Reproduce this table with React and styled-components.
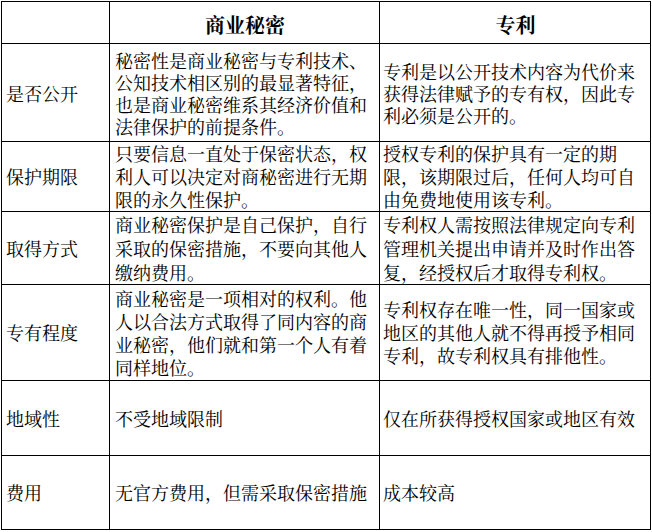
import styled, { createGlobalStyle } from "styled-components";

const GlobalStyle = createGlobalStyle`
  body {
    margin: 0;
    background: #fff;
    font-family: "Noto Serif CJK SC", "Noto Sans CJK SC", serif;
    color: #000;
  }
`;

const Page = styled.div`
  padding: 1px;
`;

const Grid = styled.div`
  display: inline-grid;
  grid-template-columns: 107px 269px 270px;
  grid-template-rows: 41px 97px 69px 72px 95px 74px 73px;
  gap: 1px;
  padding: 1px;
  background: #000;
`;

const Row = styled.div`
  display: contents;
  line-height: ${(p) => p.$lh || 23}px;
`;

const Cell = styled.div`
  background: #fff;
  display: flex;
  align-items: center;
  font-size: 18px;
  padding: 0 3px 0 ${(p) => p.$pl || 4}px;
`;

const HeadCell = styled(Cell)`
  justify-content: center;
  font-weight: bold;
  font-size: 20px;
  padding-top: 4px;
`;

const rows = [
  {
    label: "是否公开",
    lh: 22,
    secret: "秘密性是商业秘密与专利技术、公知技术相区别的最显著特征，也是商业秘密维系其经济价值和法律保护的前提条件。",
    patent: "专利是以公开技术内容为代价来获得法律赋予的专有权，因此专利必须是公开的。",
  },
  {
    label: "保护期限",
    lh: 23,
    secret: "只要信息一直处于保密状态，权利人可以决定对商秘密进行无期限的永久性保护。",
    patent: "授权专利的保护具有一定的期限，该期限过后，任何人均可自由免费地使用该专利。",
  },
  {
    label: "取得方式",
    lh: 24,
    secret: "商业秘密保护是自己保护，自行采取的保密措施，不要向其他人缴纳费用。",
    patent: "专利权人需按照法律规定向专利管理机关提出申请并及时作出答复，经授权后才取得专利权。",
  },
  {
    label: "专有程度",
    lh: 23,
    secret: "商业秘密是一项相对的权利。他人以合法方式取得了同内容的商业秘密，他们就和第一个人有着同样地位。",
    patent: "专利权存在唯一性，同一国家或地区的其他人就不得再授予相同专利，故专利权具有排他性。",
  },
  {
    label: "地域性",
    lh: 23,
    secret: "不受地域限制",
    patent: "仅在所获得授权国家或地区有效",
  },
  {
    label: "费用",
    lh: 23,
    secret: "无官方费用，但需采取保密措施",
    patent: "成本较高",
  },
];

export default function App() {
  return (
    <>
      <GlobalStyle />
      <Page>
        <Grid>
          <Row>
            <HeadCell />
            <HeadCell>商业秘密</HeadCell>
            <HeadCell>专利</HeadCell>
          </Row>
          {rows.map((r) => (
            <Row key={r.label} $lh={r.lh}>
              <Cell $pl={4}>{r.label}</Cell>
              <Cell $pl={5}>{r.secret}</Cell>
              <Cell $pl={3}>{r.patent}</Cell>
            </Row>
          ))}
        </Grid>
      </Page>
    </>
  );
}
